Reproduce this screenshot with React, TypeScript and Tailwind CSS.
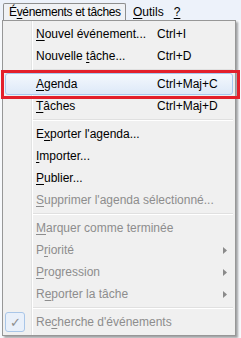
import React from 'react'

type Item =
  | { kind: 'sep' }
  | {
      kind: 'item'
      pre: string
      key: string
      post: string
      shortcut?: string
      disabled?: boolean
      submenu?: boolean
      checked?: boolean
      active?: boolean
    }

const items: Item[] = [
  { kind: 'item', pre: '', key: 'N', post: 'ouvel événement...', shortcut: 'Ctrl+I' },
  { kind: 'item', pre: 'Nouvelle ', key: 't', post: 'âche...', shortcut: 'Ctrl+D' },
  { kind: 'sep' },
  { kind: 'item', pre: '', key: 'A', post: 'genda', shortcut: 'Ctrl+Maj+C', active: true },
  { kind: 'item', pre: '', key: 'T', post: 'âches', shortcut: 'Ctrl+Maj+D' },
  { kind: 'sep' },
  { kind: 'item', pre: 'E', key: 'x', post: "porter l'agenda..." },
  { kind: 'item', pre: '', key: 'I', post: 'mporter...' },
  { kind: 'item', pre: '', key: 'P', post: 'ublier...' },
  { kind: 'item', pre: '', key: 'S', post: "upprimer l'agenda sélectionné...", disabled: true },
  { kind: 'sep' },
  { kind: 'item', pre: '', key: 'M', post: 'arquer comme terminée', disabled: true },
  { kind: 'item', pre: 'P', key: 'r', post: 'iorité', disabled: true, submenu: true },
  { kind: 'item', pre: '', key: 'P', post: 'rogression', disabled: true, submenu: true },
  { kind: 'item', pre: 'R', key: 'e', post: 'porter la tâche', disabled: true, submenu: true },
  { kind: 'sep' },
  { kind: 'item', pre: 'Re', key: 'c', post: "herche d'événements", disabled: true, checked: true },
]

function Arrow() {
  return (
    <svg width="4" height="7" viewBox="0 0 4 7" className="mr-[6px]">
      <path d="M0 0 L4 3.5 L0 7 Z" fill="#8a8a8a" />
    </svg>
  )
}

export default function App() {
  return (
    <div className="relative w-[241px] h-[338px] overflow-hidden bg-[#f7f9fc] text-[12px] leading-none text-black whitespace-nowrap font-['Liberation_Sans',sans-serif]">
      {/* menu bar */}
      <div className="h-[20px] flex items-end bg-[#edf2fa] pl-[3px]">
        <div className="h-[17px] w-[123px] flex items-center pl-[5px] border border-b-0 border-[#8e8f8f] rounded-t-[2px] bg-[#f0f2f5] tracking-[-0.35px]">
          <span>
            É<span className="underline underline-offset-2">v</span>énements et tâches
          </span>
        </div>
        <div className="h-[17px] flex items-center ml-[7px]">
          <span className="underline underline-offset-2">O</span>utils
        </div>
        <div className="h-[17px] flex items-center ml-[10px] underline underline-offset-2">?</div>
      </div>

      {/* dropdown */}
      <div className="absolute left-[2px] top-[20px] w-[234px] border border-[#979797] bg-[#f0f0f0] p-[2px] shadow-[2px_2px_2px_rgba(0,0,0,0.35)]">
        <div className="absolute left-[28px] inset-y-0 w-[2px] border-l border-l-[#e2e3e3] border-r border-r-white" />
        {items.map((it, i) =>
          it.kind === 'sep' ? (
            <div key={i} className="relative h-[6px] flex flex-col justify-center pl-[28px]">
              <div className="h-[1px] bg-[#e0e0e0]" />
              <div className="h-[1px] bg-[#ffffff]" />
            </div>
          ) : (
            <div
              key={i}
              className={
                'relative h-[22px] flex items-center ' +
                (it.active
                  ? 'rounded-[3px] border border-[#a8c8ee] bg-gradient-to-b from-[#f4f8fd] to-[#dde9f8]'
                  : '') +
                (it.disabled ? ' text-[#8d8d8d]' : '')
              }
            >
              {it.checked && (
                <div className="absolute left-0 top-[1px] w-[20px] h-[20px] rounded-[3px] border border-[#a9c6e8] bg-[#e9f0fa] flex items-center justify-center text-[#8d8d8d] text-[13px]">
                  ✓
                </div>
              )}
              <div className={'flex-none ' + (it.active ? 'pl-[30px] w-[151px]' : 'pl-[31px] w-[152px]')}>
                {it.pre}
                <span className="underline underline-offset-2">{it.key}</span>
                {it.post}
              </div>
              {it.shortcut && <div className="flex-1">{it.shortcut}</div>}
              {it.submenu && <div className="ml-auto">{<Arrow />}</div>}
            </div>
          )
        )}
      </div>

      {/* red highlight frame */}
      <div className="absolute left-[1px] top-[70px] w-[239px] h-[29px] border-[3px] border-[#e3202b]" />
    </div>
  )
}
